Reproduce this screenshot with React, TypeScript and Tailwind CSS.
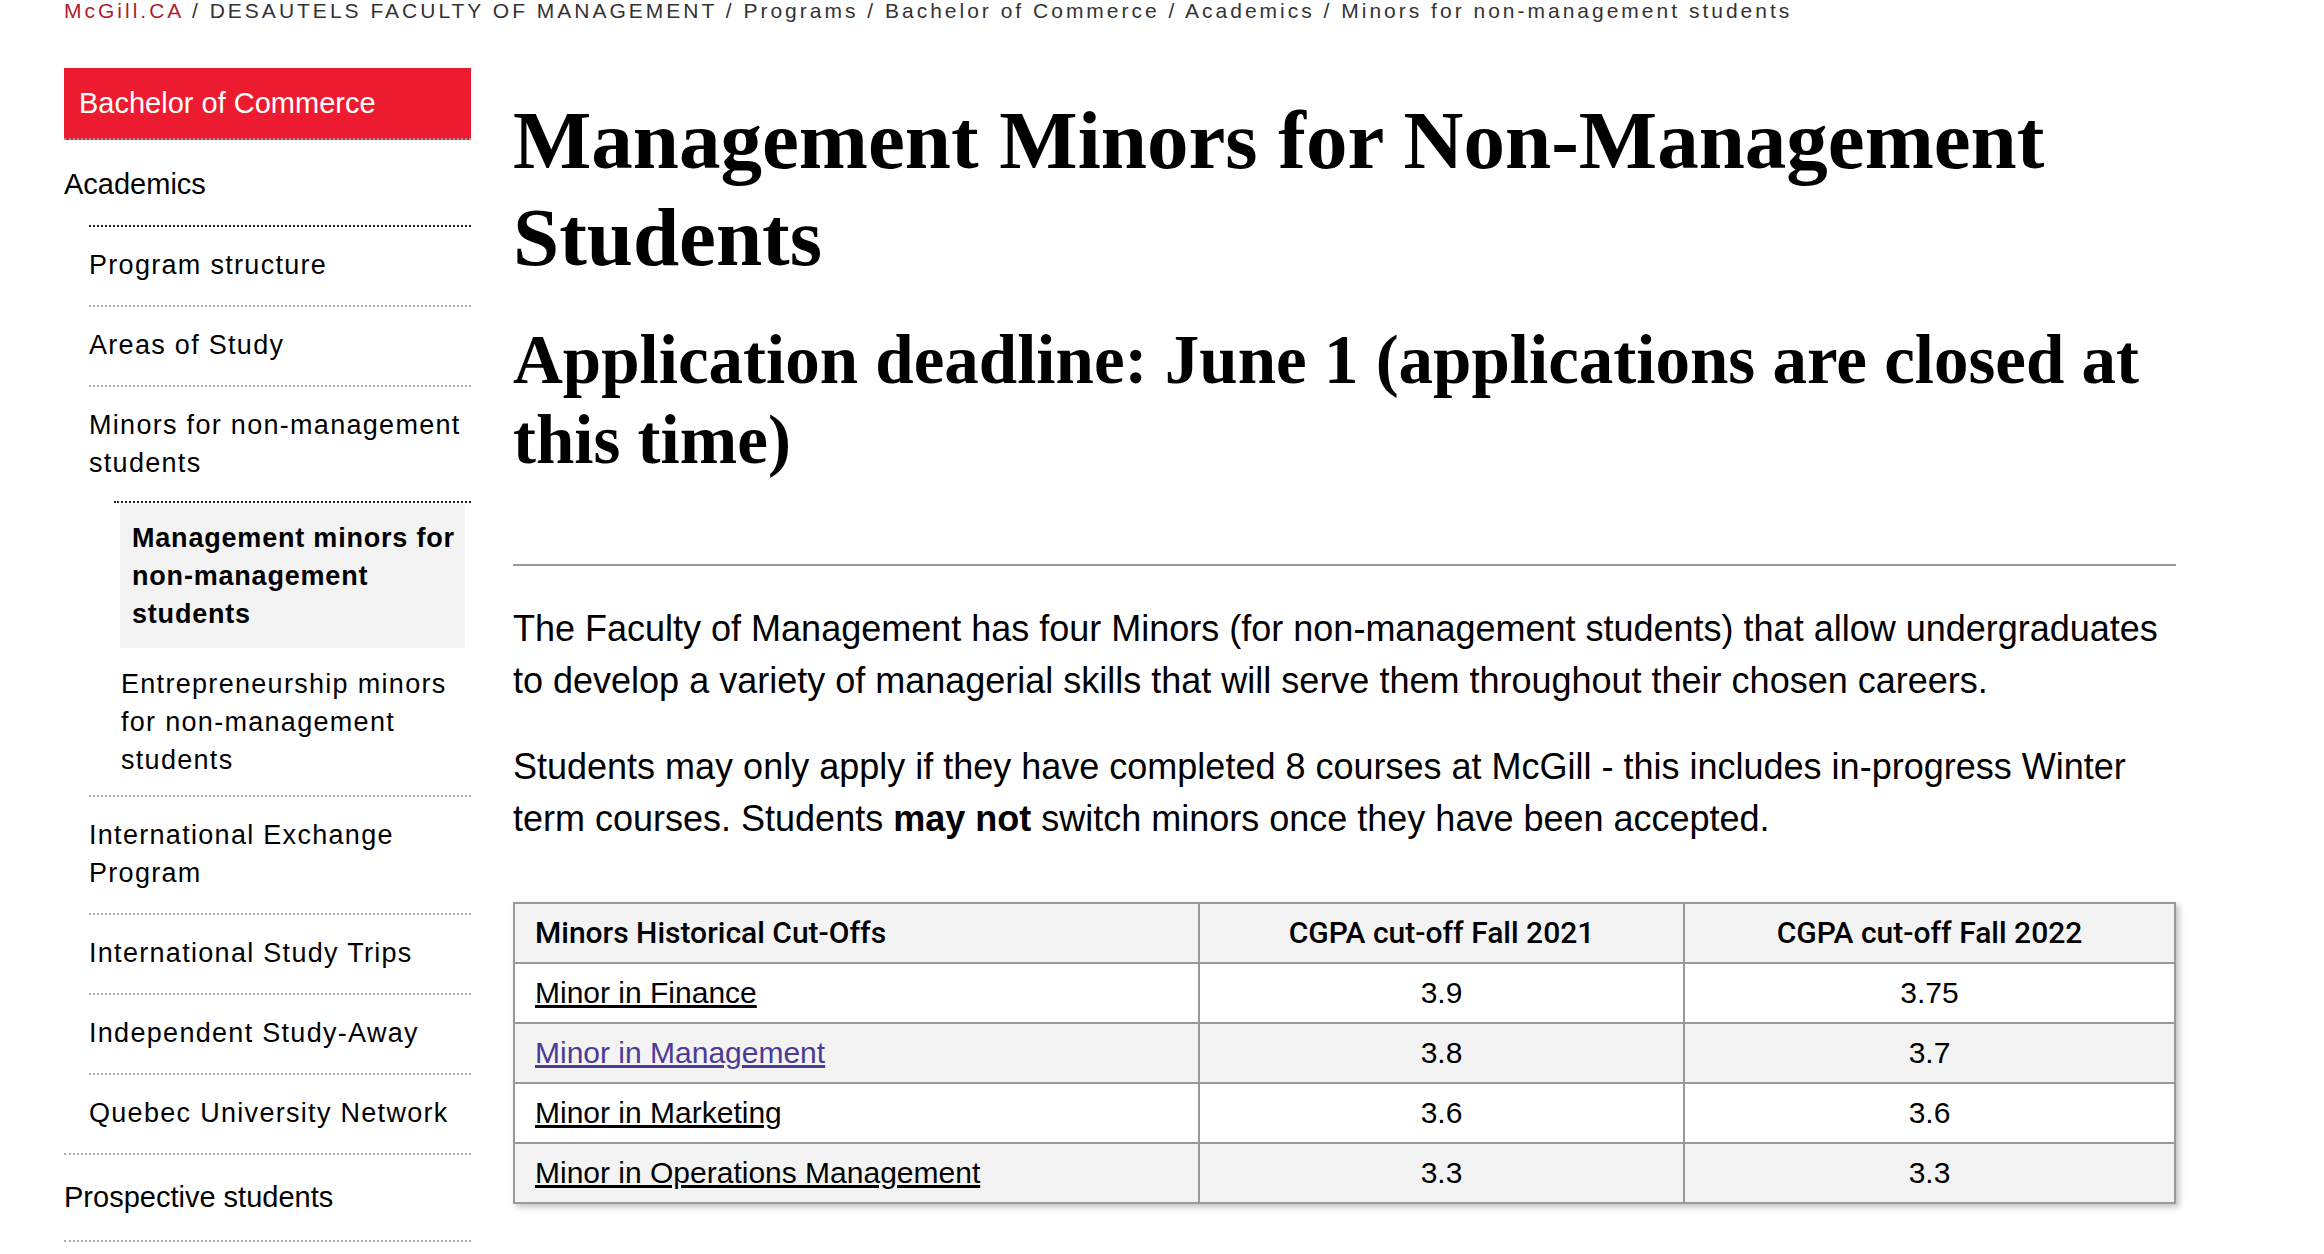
import React from "react";

const subItems = [
  "Program structure",
  "Areas of Study",
  "Minors for non-management students",
  "International Exchange Program",
  "International Study Trips",
  "Independent Study-Away",
  "Quebec University Network",
];

const rows = [
  { name: "Minor in Finance", a: "3.9", b: "3.75", visited: false },
  { name: "Minor in Management", a: "3.8", b: "3.7", visited: true },
  { name: "Minor in Marketing", a: "3.6", b: "3.6", visited: false },
  { name: "Minor in Operations Management", a: "3.3", b: "3.3", visited: false },
];

export default function App() {
  return (
    <div className="min-h-screen bg-white text-black font-['Liberation_Sans',Arial,sans-serif] pl-[64px] overflow-hidden">
      {/* Breadcrumb */}
      <div className="-mt-[4px] h-[30px] leading-[30px] text-[21px] tracking-[3px] text-[#333] whitespace-nowrap">
        <a className="text-[#b01c2e]">McGill.CA</a> / DESAUTELS FACULTY OF MANAGEMENT / Programs / Bachelor of Commerce / Academics / Minors for non-management students
      </div>

      <div className="mt-[42px] flex gap-[42px] items-start">
        {/* Sidebar */}
        <nav className="w-[407px] shrink-0">
          <div className="bg-[#ed1b2f] text-white text-[29px] leading-[38px] px-[15px] py-4 border-b-2 border-dotted border-[#999]">
            Bachelor of Commerce
          </div>
          <ul>
            <li className="border-b-2 border-dotted border-[#aaa]">
              <div className="text-[29px] leading-[38px] pt-[25px] pb-[22px]">Academics</div>
              <ul className="ml-[25px] border-t-2 border-dotted border-[#222]">
                {subItems.map((item, i) => (
                  <li
                    key={item}
                    className={i < subItems.length - 1 ? "border-b-2 border-dotted border-[#aaa]" : ""}
                  >
                    <div className="text-[27px] leading-[38px] tracking-[1.3px] pt-[19px] pb-[21px]">{item}</div>
                    {i === 2 && (
                      <ul className="ml-[25px] -mt-[2px] border-t-2 border-dotted border-[#222]">
                        <li className="mx-[6px] mt-px bg-[#f3f3f3] pl-3 pr-2 pt-[15px] pb-[15px] text-[27px] leading-[38px] tracking-[0.8px] font-bold">
                          Management minors for non-management students
                        </li>
                        <li className="mx-[6px] pl-px pt-[17px] pb-[16px] text-[27px] leading-[38px] tracking-[1.3px]">
                          Entrepreneurship minors for non-management students
                        </li>
                      </ul>
                    )}
                  </li>
                ))}
              </ul>
            </li>
            <li className="border-b-2 border-dotted border-[#aaa]">
              <div className="text-[29px] leading-[38px] pt-[23px] pb-[24px]">Prospective students</div>
            </li>
          </ul>
        </nav>

        {/* Main content */}
        <main className="w-[1663px] shrink-0 mt-[24px]">
          <h1 className="font-['Liberation_Serif',serif] font-bold text-[83px] leading-[97px]">
            Management Minors for Non-Management Students
          </h1>
          <h2 className="mt-[34px] font-['Liberation_Serif',serif] font-bold text-[69px] leading-[80px]">
            Application deadline: June 1 (applications are closed at this time)
          </h2>

          <hr className="mt-[84px] border-0 border-t-2 border-[#999]" />

          <p className="mt-[37px] text-[36px] leading-[52px]">
            The Faculty of Management has four Minors (for non-management students) that allow undergraduates to develop a variety of managerial skills that will serve them throughout their chosen careers.
          </p>
          <p className="mt-[34px] text-[36px] leading-[52px]">
            Students may only apply if they have completed 8 courses at McGill - this includes in-progress Winter term courses. Students <strong className="font-bold">may not</strong> switch minors once they have been accepted.
          </p>

          <table className="mt-[57px] w-full border-collapse border-2 border-[#999] shadow-[3px_3px_6px_rgba(0,0,0,0.25)] text-[30px] leading-[38px]">
            <thead>
              <tr className="bg-[#f3f3f3]">
                <th className="w-[685px] border-2 border-[#999] px-[20px] py-[10px] text-left font-medium font-['Roboto',sans-serif]">
                  Minors Historical Cut-Offs
                </th>
                <th className="w-[485px] border-2 border-[#999] px-[20px] py-[10px] text-center font-medium font-['Roboto',sans-serif]">
                  CGPA cut-off Fall 2021
                </th>
                <th className="border-2 border-[#999] px-[20px] py-[10px] text-center font-medium font-['Roboto',sans-serif]">
                  CGPA cut-off Fall 2022
                </th>
              </tr>
            </thead>
            <tbody>
              {rows.map((r, i) => (
                <tr key={r.name} className={i % 2 === 1 ? "bg-[#f3f3f3]" : "bg-white"}>
                  <td className="border-2 border-[#999] px-[20px] py-[10px]">
                    <a className={r.visited ? "underline text-[#4b3b96]" : "underline text-black"}>{r.name}</a>
                  </td>
                  <td className="border-2 border-[#999] px-[20px] py-[10px] text-center">{r.a}</td>
                  <td className="border-2 border-[#999] px-[20px] py-[10px] text-center">{r.b}</td>
                </tr>
              ))}
            </tbody>
          </table>
        </main>
      </div>
    </div>
  );
}
